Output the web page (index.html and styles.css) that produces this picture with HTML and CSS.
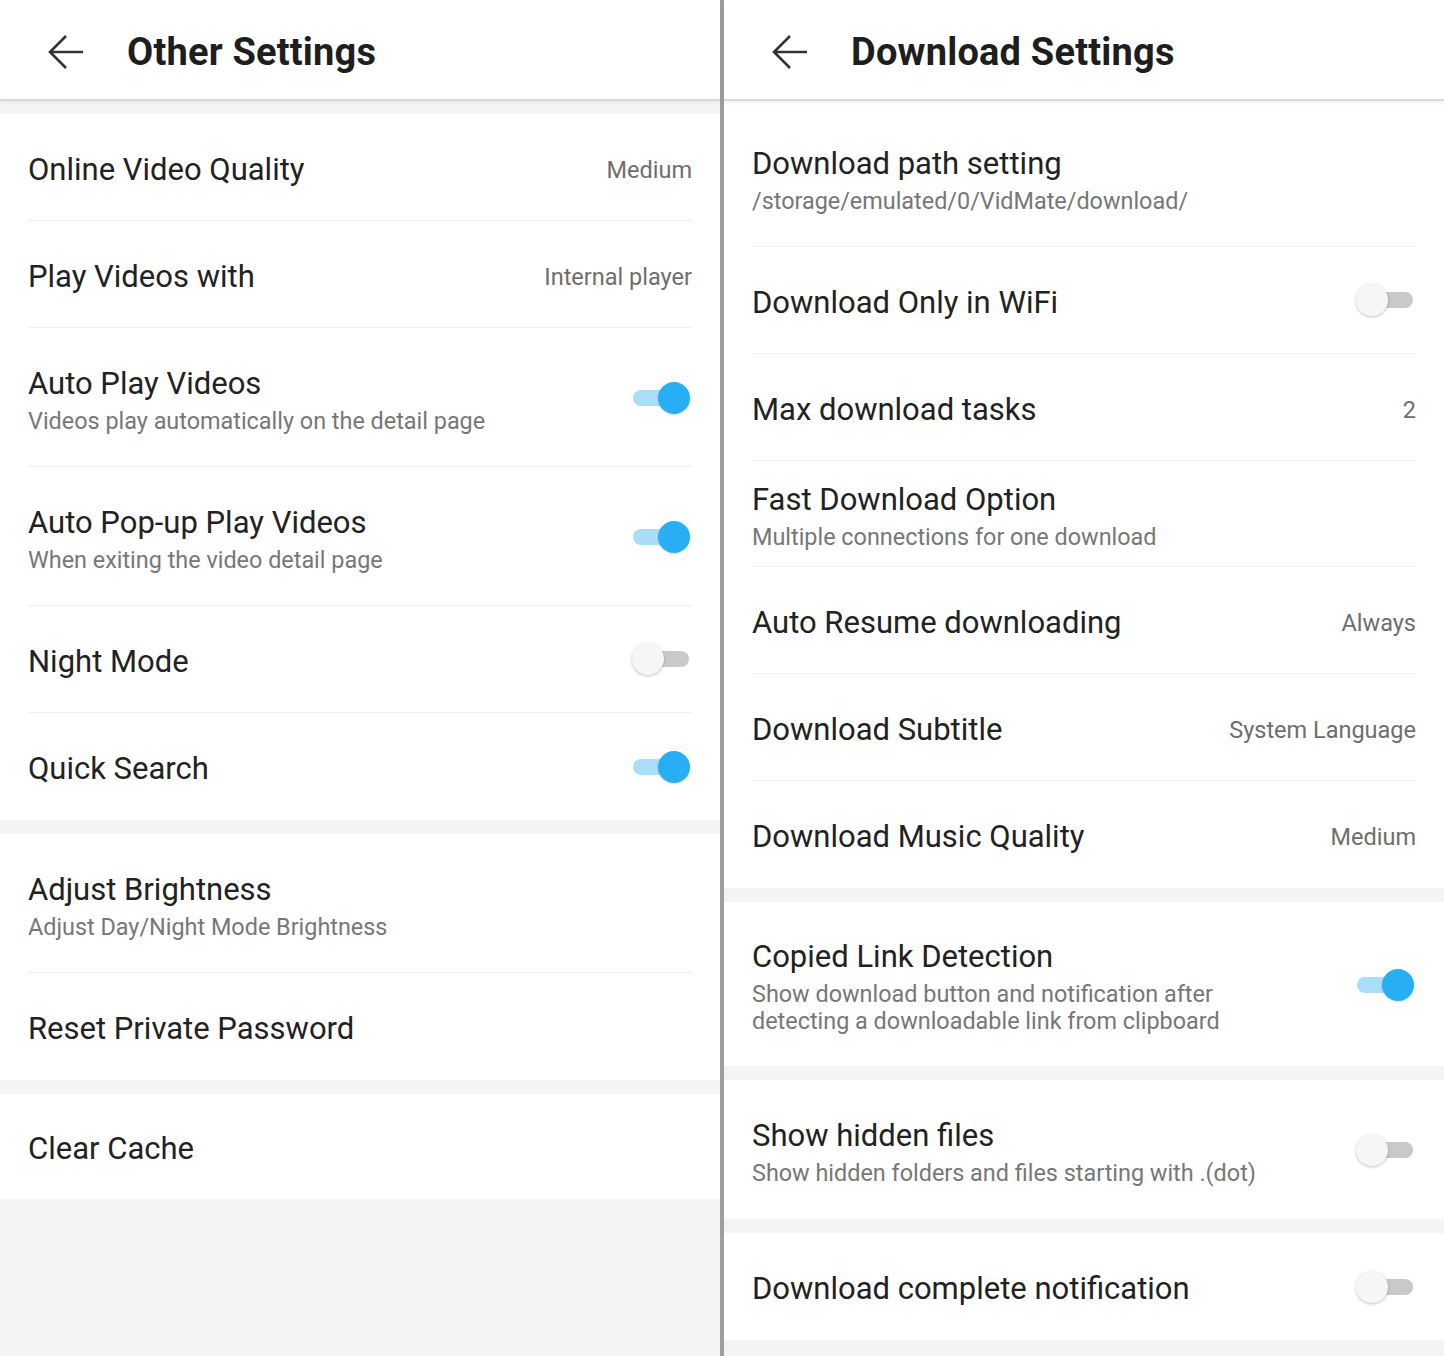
FILE: index.html
```html
<!DOCTYPE html>
<html lang="en">
<head>
    <meta charset="UTF-8">
    <meta name="viewport" content="width=device-width, initial-scale=1.0">
    <title>Settings</title>
    <link rel="stylesheet" href="styles.css">
</head>
<body>
    <div class="screens">
        <!-- Other Settings -->
        <div class="screen">
            <div class="header">
                <svg class="back" width="38" height="36" viewBox="0 0 38 36"><path d="M36 18H3M19 2L3 18l16 16" fill="none" stroke="#333" stroke-width="2.6"/></svg>
                <h1>Other Settings</h1>
            </div>
            <div class="list gap-top">
                <div class="group">
                    <div class="row"><div class="row-text"><p class="title">Online Video Quality</p></div><span class="value">Medium</span></div>
                    <div class="row"><div class="row-text"><p class="title">Play Videos with</p></div><span class="value">Internal player</span></div>
                    <div class="row tall"><div class="row-text"><p class="title">Auto Play Videos</p><p class="sub">Videos play automatically on the detail page</p></div><span class="toggle on"></span></div>
                    <div class="row tall"><div class="row-text"><p class="title">Auto Pop-up Play Videos</p><p class="sub">When exiting the video detail page</p></div><span class="toggle on"></span></div>
                    <div class="row"><div class="row-text"><p class="title">Night Mode</p></div><span class="toggle"></span></div>
                    <div class="row"><div class="row-text"><p class="title">Quick Search</p></div><span class="toggle on"></span></div>
                </div>
                <div class="group">
                    <div class="row tall"><div class="row-text"><p class="title">Adjust Brightness</p><p class="sub">Adjust Day/Night Mode Brightness</p></div></div>
                    <div class="row"><div class="row-text"><p class="title">Reset Private Password</p></div></div>
                </div>
                <div class="group">
                    <div class="row short"><div class="row-text"><p class="title">Clear Cache</p></div></div>
                </div>
            </div>
        </div>

        <!-- Download Settings -->
        <div class="screen right">
            <div class="header">
                <svg class="back" width="38" height="36" viewBox="0 0 38 36"><path d="M36 18H3M19 2L3 18l16 16" fill="none" stroke="#333" stroke-width="2.6"/></svg>
                <h1>Download Settings</h1>
            </div>
            <div class="list">
                <div class="group first">
                    <div class="row tall"><div class="row-text"><p class="title">Download path setting</p><p class="sub">/storage/emulated/0/VidMate/download/</p></div></div>
                    <div class="row"><div class="row-text"><p class="title">Download Only in WiFi</p></div><span class="toggle"></span></div>
                    <div class="row"><div class="row-text"><p class="title">Max download tasks</p></div><span class="value">2</span></div>
                    <div class="row mid"><div class="row-text"><p class="title">Fast Download Option</p><p class="sub">Multiple connections for one download</p></div></div>
                    <div class="row"><div class="row-text"><p class="title">Auto Resume downloading</p></div><span class="value">Always</span></div>
                    <div class="row"><div class="row-text"><p class="title">Download Subtitle</p></div><span class="value">System Language</span></div>
                    <div class="row"><div class="row-text"><p class="title">Download Music Quality</p></div><span class="value">Medium</span></div>
                </div>
                <div class="group">
                    <div class="row tall"><div class="row-text narrow"><p class="title">Copied Link Detection</p><p class="sub">Show download button and notification after detecting a downloadable link from clipboard</p></div><span class="toggle on"></span></div>
                </div>
                <div class="group">
                    <div class="row tall"><div class="row-text"><p class="title">Show hidden files</p><p class="sub">Show hidden folders and files starting with .(dot)</p></div><span class="toggle"></span></div>
                </div>
                <div class="group">
                    <div class="row"><div class="row-text"><p class="title">Download complete notification</p></div><span class="toggle"></span></div>
                </div>
            </div>
        </div>
    </div>
</body>
</html>
```

FILE: styles.css
```css
* {
    margin: 0;
    padding: 0;
    box-sizing: border-box;
}

body {
    font-family: Roboto, 'Noto Sans', sans-serif;
    background: #f4f4f4;
    width: 1444px;
    height: 1356px;
    overflow: hidden;
}

.screens {
    display: flex;
    height: 1356px;
}

.screen {
    width: 720px;
    height: 100%;
    background: #f4f4f4;
    display: flex;
    flex-direction: column;
}

.screen.right {
    width: 724px;
    border-left: 4px solid #9e9e9e;
}

.header {
    height: 101px;
    background: #fff;
    display: flex;
    align-items: center;
    padding: 4px 0 0 47px;
    gap: 42px;
    border-bottom: 2px solid #d8d8d8;
    box-shadow: 0 2px 4px rgba(0, 0, 0, 0.06);
    position: relative;
    z-index: 1;
    flex-shrink: 0;
}

.header h1 {
    font-size: 38px;
    font-weight: 700;
    color: #1e1e1e;
    letter-spacing: 0.2px;
}

.list {
    display: flex;
    flex-direction: column;
    gap: 14px;
}

.list.gap-top {
    padding-top: 13px;
}

.group {
    background: #fff;
    padding: 0 28px;
}

.group.first {
    padding-top: 5px;
}

.row {
    min-height: 107px;
    padding-top: 5px;
    display: flex;
    align-items: center;
    justify-content: space-between;
    border-bottom: 1px solid #f0f0f0;
}

.row:last-child {
    border-bottom: none;
}

.row.tall {
    min-height: 139px;
    padding: 37px 0 31px;
}

.group.first .row.tall {
    min-height: 141px;
    padding-top: 39px;
}

.row.mid {
    min-height: 106px;
}

.row.short {
    min-height: 105px;
}

.row-text.narrow {
    max-width: 480px;
}

.title {
    font-size: 31px;
    line-height: 36px;
    color: #222;
}

.sub {
    font-size: 23.4px;
    line-height: 27px;
    color: #777;
    margin-top: 6px;
}

.value {
    font-size: 23.5px;
    color: #6e6e6e;
}

.toggle {
    position: relative;
    width: 58px;
    height: 32px;
    margin: 0 2px 5px 0;
    flex-shrink: 0;
}

.toggle::before {
    content: '';
    position: absolute;
    left: 1px;
    right: 1px;
    top: 8px;
    height: 16px;
    border-radius: 8px;
    background: #c9c9c9;
}

.toggle::after {
    content: '';
    position: absolute;
    left: 0;
    top: 0;
    width: 32px;
    height: 32px;
    border-radius: 50%;
    background: #f6f6f6;
    box-shadow: 0 1px 3px rgba(0, 0, 0, 0.25);
}

.toggle.on::before {
    background: #a9ddfa;
}

.toggle.on::after {
    left: auto;
    right: 0;
    background: #27aef4;
    box-shadow: 0 1px 2px rgba(0, 0, 0, 0.15);
}
```
